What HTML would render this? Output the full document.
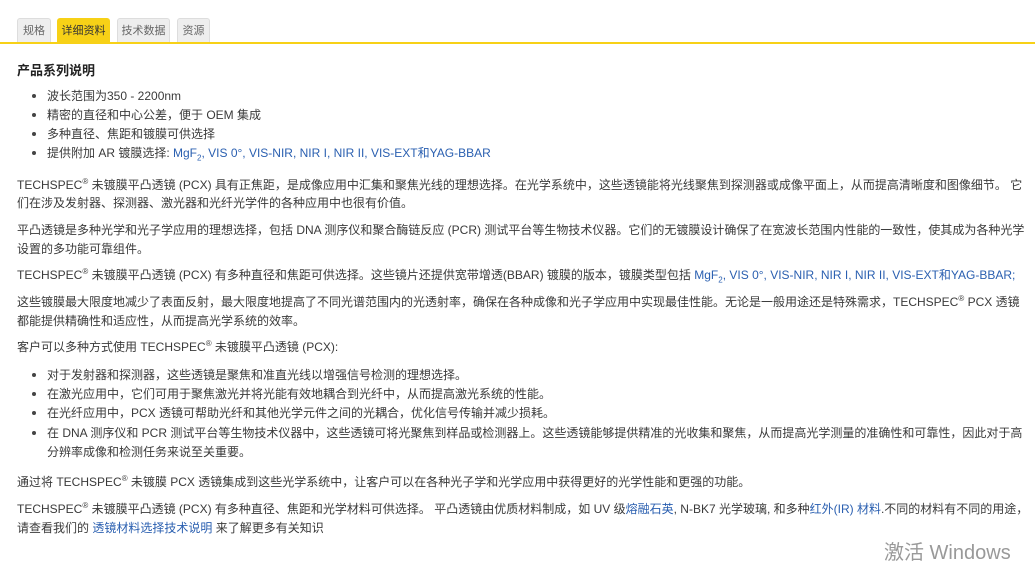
<!DOCTYPE html>
<html><head><meta charset="utf-8"><style>
body{margin:0;width:1035px;height:571px;background:#fff;font-family:"Liberation Sans","Noto Sans CJK SC",sans-serif;font-size:12px;color:#3a3a3a;position:relative;overflow:hidden}
.l{position:absolute;white-space:nowrap;line-height:14px}
a{color:#2a5fb0;text-decoration:none}
sup{font-size:8px;line-height:0;vertical-align:5px}
sub{font-size:8px;line-height:0}
.tab{position:absolute;top:18px;height:24px;line-height:25px;font-size:11px;color:#666;background:#eee;border:1px solid #ddd;border-bottom:none;border-radius:3px 3px 0 0;text-align:center;box-sizing:border-box}
.b{position:absolute;width:4px;height:4px;border-radius:50%;background:#444}
</style></head><body>
<div class="tab" style="left:17px;width:34px">规格</div>
<div class="tab" style="left:57px;width:53px;background:#f7d117;border-color:#f7d117;color:#333">详细资料</div>
<div class="tab" style="left:117px;width:53px">技术数据</div>
<div class="tab" style="left:177px;width:33px">资源</div>
<div style="position:absolute;left:0;top:42px;width:1035px;height:2px;background:#f7d117"></div>
<div class="l" style="left:17px;top:64px;font-size:13px;font-weight:bold;color:#222">产品系列说明</div>
<div class="b" style="left:32px;top:94px"></div><div class="l" style="left:47px;top:89px">波长范围为350 - 2200nm</div>
<div class="b" style="left:32px;top:113px"></div><div class="l" style="left:47px;top:108px">精密的直径和中心公差，便于 OEM 集成</div>
<div class="b" style="left:32px;top:132px"></div><div class="l" style="left:47px;top:127px">多种直径、焦距和镀膜可供选择</div>
<div class="b" style="left:32px;top:151px"></div><div class="l" style="left:47px;top:146px">提供附加 AR 镀膜选择: <a>MgF<sub>2</sub>, VIS 0°, VIS-NIR, NIR I, NIR II, VIS-EXT和YAG-BBAR</a></div>
<div class="l" style="left:17px;top:178px">TECHSPEC<sup>®</sup> 未镀膜平凸透镜 (PCX) 具有正焦距，是成像应用中汇集和聚焦光线的理想选择。在光学系统中，这些透镜能将光线聚焦到探测器或成像平面上，从而提高清晰度和图像细节。  它</div>
<div class="l" style="left:17px;top:196px">们在涉及发射器、探测器、激光器和光纤光学件的各种应用中也很有价值。</div>
<div class="l" style="left:17px;top:223px">平凸透镜是多种光学和光子学应用的理想选择，包括 DNA 测序仪和聚合酶链反应 (PCR) 测试平台等生物技术仪器。它们的无镀膜设计确保了在宽波长范围内性能的一致性，使其成为各种光学</div>
<div class="l" style="left:17px;top:242px">设置的多功能可靠组件。</div>
<div class="l" style="left:17px;top:268px">TECHSPEC<sup>®</sup> 未镀膜平凸透镜 (PCX) 有多种直径和焦距可供选择。这些镜片还提供宽带增透(BBAR) 镀膜的版本，镀膜类型包括 <a>MgF<sub>2</sub>, VIS 0°, VIS-NIR, NIR I, NIR II, VIS-EXT和YAG-BBAR;</a></div>
<div class="l" style="left:17px;top:295px">这些镀膜最大限度地减少了表面反射，最大限度地提高了不同光谱范围内的光透射率，确保在各种成像和光子学应用中实现最佳性能。无论是一般用途还是特殊需求，TECHSPEC<sup>®</sup> PCX 透镜</div>
<div class="l" style="left:17px;top:314px">都能提供精确性和适应性，从而提高光学系统的效率。</div>
<div class="l" style="left:17px;top:340px">客户可以多种方式使用 TECHSPEC<sup>®</sup> 未镀膜平凸透镜 (PCX):</div>
<div class="b" style="left:32px;top:373px"></div><div class="l" style="left:47px;top:368px">对于发射器和探测器，这些透镜是聚焦和准直光线以增强信号检测的理想选择。</div>
<div class="b" style="left:32px;top:392px"></div><div class="l" style="left:47px;top:387px">在激光应用中，它们可用于聚焦激光并将光能有效地耦合到光纤中，从而提高激光系统的性能。</div>
<div class="b" style="left:32px;top:411px"></div><div class="l" style="left:47px;top:406px">在光纤应用中，PCX 透镜可帮助光纤和其他光学元件之间的光耦合，优化信号传输并减少损耗。</div>
<div class="b" style="left:32px;top:431px"></div><div class="l" style="left:47px;top:426px">在 DNA 测序仪和 PCR 测试平台等生物技术仪器中，这些透镜可将光聚焦到样品或检测器上。这些透镜能够提供精准的光收集和聚焦，从而提高光学测量的准确性和可靠性，因此对于高</div>
<div class="l" style="left:47px;top:445px">分辨率成像和检测任务来说至关重要。</div>
<div class="l" style="left:17px;top:475px">通过将 TECHSPEC<sup>®</sup> 未镀膜 PCX 透镜集成到这些光学系统中，让客户可以在各种光子学和光学应用中获得更好的光学性能和更强的功能。</div>
<div class="l" style="left:17px;top:502px">TECHSPEC<sup>®</sup> 未镀膜平凸透镜 (PCX) 有多种直径、焦距和光学材料可供选择。  平凸透镜由优质材料制成，如 UV 级<a>熔融石英</a>, N-BK7 光学玻璃, 和多种<a>红外(IR) 材料</a>.不同的材料有不同的用途，</div>
<div class="l" style="left:17px;top:521px">请查看我们的 <a>透镜材料选择技术说明</a> 来了解更多有关知识</div>
<div class="l" style="left:884px;top:542px;font-size:20px;line-height:22px;color:#999">激活 Windows</div>
</body></html>
